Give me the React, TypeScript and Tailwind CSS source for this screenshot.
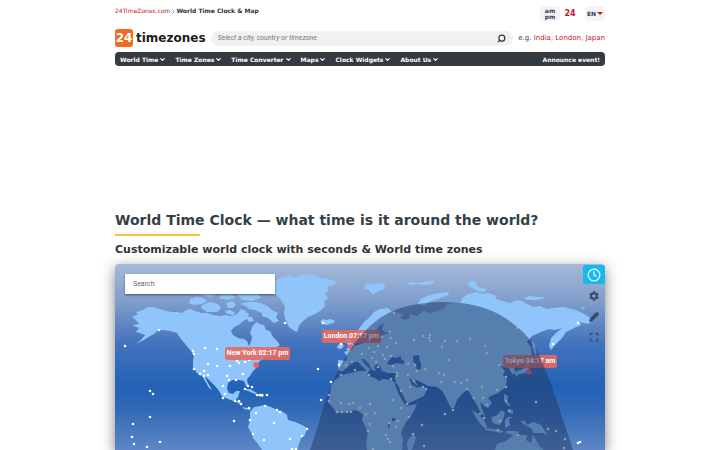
import { ChevronDown, ChevronRight, Clock, Maximize, Pencil, Search } from "lucide-react";
import { MdSettings } from "react-icons/md";

const NAV = ["World Time", "Time Zones", "Time Converter", "Maps", "Clock Widgets", "About Us"];

const PLACES = ["India", "London", "Japan"];

// map units: x 115..605, y 264..450
const VIEW_BOX = "115 264 490 186";

const LAND = [
  // North America
  "M132 325L139 324 136 320 132 317 138 314 136 312 143 310 148 307 152 307 160 309 166 311 172 312 177 312 182 313 186 310 190 309 195 311 201 313 207 313 213 315 220 316 226 315 230 316 235 315 238 313 241 309 246 311 249 315 247 319 243 321 240 324 234 327 231 331 233 335 238 338 244 339 247 341 249 346 251 342 252 337 250 333 252 327 256 322 260 324 264 325 266 330 270 331 273 337 277 341 280 345 276 348 268 349 266 352 272 351 277 354 271 357 267 355 263 358 260 361 257 364 256 368 253 371 250 376 247 379 248 385 246 386 244 381 239 380 232 380 228 383 227 389 229 393 233 394 236 391 240 391 238 397 235 401 240 401 242 407 247 408 251 408 250 410 244 409 240 404 234 401 228 399 222 396 219 391 215 386 210 381 206 377 205 377 208 383 212 390 209 388 205 381 202 376 197 373 193 367 193 360 194 356 191 351 186 345 181 339 177 333 170 331 163 330 158 330 154 334 150 336 144 340 136 344 141 340 145 335 140 333 136 332 139 328z",
  // Arctic islands
  "M190 299l6-2 7 1 4 3-5 3-8 1-5-2zM202 305l8-3 8 2 3 4-4 4-10 0-6-4zM196 294l10-2 11 2-6 3zM219 296l10-2 7 3-7 3-8-1zM226 303l6-2 4 3-3 4-5 0zM237 295l12-4 9 3 3 4-9 3-9-1zM240 304l8-2 9 0 9 3 6 5 6 3-2 4 3 4-5 2-6-5-6-2 0-3-7-3-6-1-3-3zM225 311l5-1 6 3-3 2-6-1zM243 284l12-8 14-2 9 2-8 5-5 5-7 4-9 0zM246 317l6 0 2 4-5 1z",
  // Greenland
  "M272 283L277 279 284 277 290 276 294 278 300 275 307 274 313 275 320 278 328 279 337 282 333 285 327 287 329 291 325 294 328 298 324 301 325 306 320 311 313 315 308 317 302 322 299 326 297 332 293 330 289 327 285 319 284 313 285 307 281 300 276 294 270 292z",
  "M320 321l3-2 3 1 5-1 4 2-2 2-6 2-4-1z",
  "M364 286l5-3 5 1 7-1 4 2-1 4-4 1-5 3-1 2-3-2-2-3-4-1zM408 283l6-1 6 1 6-2 8 0-1 3-8 1-8-1-7 1z",
  // Caribbean
  "M244 389l6 0 7 4-2 1-7-3zM258 394l6 1-1 2-5-1z",
  // South America
  "M250 412L254 407 260 406 265 405 271 407 277 410 283 412 287 415 288 420 295 422 302 425 307 428 305 435 301 438 299 444 297 450 262 450 258 444 253 438 252 434 248 427 250 421z",
  // Europe, Asia
  "M357 332L360 327 364 322 369 318 374 312 380 309 388 308 391 311 395 312 403 314 400 318 405 320 409 318 410 314 417 316 423 311 430 313 436 311 443 309 447 304 455 303 461 302 462 298 468 294 477 292 483 294 488 293 495 295 496 299 503 301 510 303 517 300 522 301 527 304 534 307 540 306 547 309 553 308 563 307 572 309 578 311 586 315 593 320 588 324 580 322 581 325 574 328 566 332 562 338 556 344 551 350 549 346 551 338 556 333 562 328 555 330 549 329 541 332 532 336 527 342 531 347 532 354 527 358 520 361 516 364 514 369 517 374 512 374 509 368 505 367 500 366 505 371 503 375 507 380 505 388 498 393 491 396 488 398 492 403 488 408 484 406 480 402 482 409 485 416 481 413 477 405 473 399 470 393 467 390 462 394 457 400 454 408 451 408 447 400 443 392 437 387 428 386 419 381 414 379 418 386 427 389 424 396 407 404 403 398 396 384 395 378 396 373 388 373 382 371 380 366 377 364 374 367 376 371 372 370 369 364 364 359 361 359 365 364 370 369 368 373 364 368 358 362 352 362 348 367 343 371 339 371 338 364 338 360 346 361 347 356 344 352 350 350 355 346 361 344 367 342 366 336 368 334 370 342 376 343 381 341 382 335 389 333 384 332 382 329 384 323 379 326 376 331 374 338 371 340 368 335 363 337 358 335z",
  // British Isles
  "M347 337l3-1 1 5 5 6-6 3-4 0 3-4-3-4zM338 345l4-2 2 3-3 3-4-1z",
  // Novaya Zemlya and the Siberian islands
  "M418 304l3-5 6-3 6-2 7-1 9-1-1 3-10 4-9 3-5 4zM467 284l4-3 5 1 1 4 4 2 5 1-1 3-7-1-6-3zM524 298l6-2 6 1 8 0-1 2-8 1-8 0zM580 308l5-1-1 2z",
  // Africa
  "M342 375L350 373 359 371 367 371 368 376 375 378 379 381 383 379 391 380 396 383 399 390 402 399 406 406 412 405 417 404 413 413 406 422 403 428 401 433 403 440 402 450 367 450 366 443 368 432 364 424 362 420 363 415 360 412 355 410 347 412 337 413 332 407 328 402 330 394 331 386 335 380z",
  "M408 450l-1-7 2-5 5-4 2 4-3 8-1 4z",
  // Japan, Philippines, Sunda islands
  "M532 341l3 5 2 7-2 2-3-8zM531 357l6 1-3 3-4 1zM531 363l-2 6-4 4-6 1-4 3 2-6 6-2 4-6zM504 394l4 2-1 5 4 5-4-1-3-5zM509 409l4 1 0 4-4-1zM472 410l6 4 6 6 3 6-1 3-5-4-6-9zM486 428l8 1 9 2-1 2-11-2-6-1zM491 417l5-1 6-6 3 3-3 9-3 3-6-2zM505 420l3-3 5 0-4 2 0 3 2 5-2-2-2 3-2-1zM506 431l9 0 5 1-6 3-8-2zM520 421l5 0 2 4 6-3 8 3 4 6 3 4-6-2-8 0-3-5-6-3z",
  // Australia
  "M495 450l2-6 9-3 6-5 3-2 7 1 5 0-1 5 5 3 2-8 3 5 3 6 5 4z",
].join("");

const WATER = [
  // Black Sea, Caspian, Gulf
  "M388 362l3-4 3-1 2 1 5-2 0 3 3 2 0 3-7-1-6 2-4-1z",
  "M413 356l4-1 3 1-1 3 2 4 0 6-4 1-1-5-3-4z",
  "M409 378l3 2 4 5 4 1-2 2-6-3z",
  // Red Sea
  "M394 382l3 2 5 9 5 10-2 1-6-9z",
  // African lakes
  "M392 418l3 0 0 3-3 0zM388 424l1 0 1 5-2-2z",
].join("");

const CITIES: [number, number][] = [
  [125, 346], [159, 330], [193, 351], [194, 354], [205, 348], [217, 349], [194, 369], [208, 364], [217, 366],
  [200, 374], [204, 371], [204, 376], [208, 375], [230, 366], [237, 361], [239, 363], [245, 362], [249, 360],
  [243, 374], [229, 380], [236, 380], [227, 376], [223, 386], [225, 394], [223, 398], [248, 386], [252, 387],
  [245, 389], [257, 395], [260, 395], [262, 395], [267, 395], [235, 401], [239, 401], [241, 404], [249, 408],
  [265, 406], [277, 410], [280, 412], [256, 413], [250, 420], [274, 423], [253, 434], [264, 440], [290, 439],
  [307, 429], [302, 436], [292, 449], [296, 449], [150, 391], [150, 417], [133, 424], [132, 437], [134, 444],
  [147, 447], [160, 442], [234, 421], [153, 394], [318, 369], [331, 382], [321, 400], [285, 323], [323, 323],
  [341, 344], [394, 313], [390, 332], [382, 337], [391, 338], [378, 346], [387, 347], [396, 343],
  [414, 340], [423, 336], [429, 338], [430, 341], [430, 335], [369, 348], [374, 352], [383, 355], [391, 356],
  [362, 354], [372, 358], [376, 362], [385, 359], [378, 367], [393, 366], [408, 364], [415, 365], [339, 365],
  [346, 365], [352, 362], [355, 370], [341, 375], [369, 375], [391, 379], [397, 376], [397, 373], [408, 375],
  [417, 371], [425, 369], [439, 373], [401, 391], [410, 387], [414, 381], [423, 387], [426, 389], [407, 404],
  [401, 408], [393, 400], [329, 395], [329, 401], [341, 403], [349, 404], [353, 403], [370, 404], [337, 412],
  [342, 412], [347, 412], [351, 412], [360, 408], [366, 414], [375, 413], [370, 424], [389, 423], [398, 421],
  [396, 427], [386, 435], [388, 439], [390, 442], [368, 431], [409, 417], [422, 425], [424, 446], [413, 434],
  [373, 449], [445, 341], [442, 347], [457, 341], [470, 339], [485, 346], [487, 353], [517, 328],
  [449, 360], [444, 375], [441, 382], [455, 382], [461, 383], [467, 380], [467, 389], [474, 398],
  [482, 387], [483, 398], [487, 405], [497, 390], [506, 387], [506, 377], [499, 365], [453, 410],
  [445, 414], [480, 414], [484, 418], [500, 421], [498, 430], [506, 401], [509, 411], [518, 435], [536, 402],
  [548, 429], [556, 431], [565, 439], [564, 448], [580, 442], [578, 443], [553, 344], [578, 323],
];

const PINS = [
  { name: "New York", time: "02:17 pm", box: "left-[22.4%] top-[44.6%]" },
  { name: "London", time: "07:17 pm", box: "left-[42.2%] top-[35.5%]" },
  { name: "Tokyo", time: "04:17 am", box: "left-[79.2%] top-[48.9%]" },
];

function Header() {
  return (
    <header>
      <div className="flex items-start justify-between pt-1">
        <nav className="flex items-center pt-px text-[6px] leading-[12px]">
          <a href="#" className="text-[#c4161c]">24TimeZones.com</a>
          <ChevronRight className="-mr-px size-[7px] text-[#2a93a8]" strokeWidth={3} />
          <span className="font-bold text-[#333]">World Time Clock &amp; Map</span>
        </nav>
        <div className="flex items-center pt-[2px] font-bold">
          <button className="flex h-[15px] w-5 flex-col items-center justify-center rounded bg-[#f4f4f5] text-[6px] leading-[6px] text-[#2b3d55]">
            <span>am</span>
            <span>pm</span>
          </button>
          <button className="w-5 text-[8px] leading-[15px] text-[#c4161c]">24</button>
          <button className="ml-[5px] flex h-[15px] w-5 items-center justify-center gap-px rounded bg-[#f4f4f5] text-[6px] text-[#2b3d55]">
            EN
            <span className="border-x-[3px] border-t-[3px] border-x-transparent border-t-[#c4161c]" />
          </button>
        </div>
      </div>
      <div className="mt-2 flex items-center">
        <a href="#" className="flex items-center gap-[3px] text-[12px] font-bold text-[#1c1c1c]">
          <span className="flex size-[18px] items-center justify-center rounded-[3px] bg-[#ee6c23] text-white">24</span>
          timezones
        </a>
        <form className="ml-[5px] flex h-[15px] flex-1 items-center rounded-full bg-[#f1f1f1] px-[7px]">
          <input
            aria-label="Select a city, country or timezone"
            placeholder="Select a city, country or timezone"
            className="min-w-0 flex-1 bg-transparent font-['Roboto',sans-serif] text-[7px] italic outline-none placeholder:text-[#777]"
          />
          <button type="button" aria-label="Find">
            <Search className="size-[9px] -scale-x-100 text-[#333]" strokeWidth={3} />
          </button>
        </form>
        <p className="ml-[5px] text-[7px] text-[#444]">
          e.g.{" "}
          {PLACES.map((place, i) => (
            <span key={place} className="text-[#c4161c]">
              {i > 0 && ", "}
              <a href="#">{place}</a>
            </span>
          ))}
        </p>
      </div>
      <nav className="mt-[5px] flex h-[14px] items-center gap-[9px] rounded bg-[#343a40] px-[5px] text-[6px] font-bold text-white">
        {NAV.map((item) => (
          <a key={item} href="#" className="flex items-center gap-px">
            {item}
            <ChevronDown className="size-[7px]" strokeWidth={4} />
          </a>
        ))}
        <a href="#" className="ml-auto">Announce event!</a>
      </nav>
    </header>
  );
}

function WorldMap() {
  return (
    <section className="relative mt-[6px] overflow-hidden rounded-t shadow-[0_4px_14px_rgba(0,0,0,0.5)]">
      <svg viewBox={VIEW_BOX} className="block h-auto w-full">
        <defs>
          <linearGradient id="sea" x1="0" y1="0" x2="0" y2="1">
            <stop offset="0" stopColor="#a5b9d9" />
            <stop offset="0.2" stopColor="#7f9ecb" />
            <stop offset="0.42" stopColor="#4574bd" />
            <stop offset="0.66" stopColor="#2262b6" />
            <stop offset="0.78" stopColor="#3269b6" />
            <stop offset="1" stopColor="#5d86c5" />
          </linearGradient>
        </defs>
        <rect x="115" y="264" width="490" height="186" fill="url(#sea)" />
        <path d={LAND} fill="#8fc5fb" />
        <path d={WATER} fill="#2f69b8" />
        {CITIES.map(([x, y], i) => (
          <circle key={i} cx={x} cy={y} r="1.3" fill="#fff" />
        ))}
        <g fill="#f0625a">
          <circle cx="256" cy="365" r="2.8" />
          <circle cx="351" cy="347" r="2.8" />
          <circle cx="529" cy="372" r="2.8" />
        </g>
      </svg>
      {PINS.map((pin) => (
        <div
          key={pin.name}
          className={`absolute rounded-xs bg-[#e66a62]/90 px-[2px] font-['Roboto',sans-serif] text-[7px] leading-[13px] font-bold whitespace-nowrap text-white ${pin.box}`}
        >
          {pin.name} {pin.time}
        </div>
      ))}
      {/* night side, dims the pins as well */}
      <svg viewBox={VIEW_BOX} className="pointer-events-none absolute inset-0 h-full w-full">
        <path
          d="M310 450Q317 430 324 405Q332 380 345 358Q360 332 380 318Q402 303 440 302Q478 302 500 315Q525 329 537 350Q550 378 562 417L573 450Z"
          fill="#1e3764"
          fillOpacity="0.5"
        />
      </svg>
      <input
        aria-label="Search"
        placeholder="Search"
        className="absolute top-[10px] left-[10px] h-5 w-[150px] bg-white px-2 font-['Roboto',sans-serif] text-[7px] shadow-[0_1px_2px_rgba(0,0,0,0.5)] outline-none placeholder:text-[#666]"
      />
      <div className="absolute top-px right-0 flex w-[22px] flex-col items-center gap-[10px] text-[#3a4a63]">
        <button aria-label="Clock" className="flex h-[19px] w-full items-center justify-center rounded-xs bg-[#16b9ec] text-white">
          <Clock className="size-[14px]" />
        </button>
        <button aria-label="Settings" className="-mt-1">
          <MdSettings className="size-3" />
        </button>
        <button aria-label="Edit">
          <Pencil className="size-[10px]" fill="currentColor" strokeWidth={3} />
        </button>
        <button aria-label="Full screen">
          <Maximize className="size-[10px]" strokeWidth={3} />
        </button>
      </div>
    </section>
  );
}

export default function App() {
  return (
    <div className="overflow-hidden bg-white font-['DejaVu_Sans',sans-serif]">
      <div className="mx-auto max-w-[490px]">
        <Header />
        <main className="pt-[144px]">
          <h1 className="text-[14px] leading-5 font-bold text-[#343f48]">
            World Time Clock — what time is it around the world?
          </h1>
          <div className="mt-1 h-[2px] w-[85px] bg-[#f5c044]" />
          <h2 className="mt-[6px] text-[11px] leading-4 font-bold text-[#333]">
            Customizable world clock with seconds &amp; World time zones
          </h2>
          <WorldMap />
        </main>
      </div>
    </div>
  );
}
